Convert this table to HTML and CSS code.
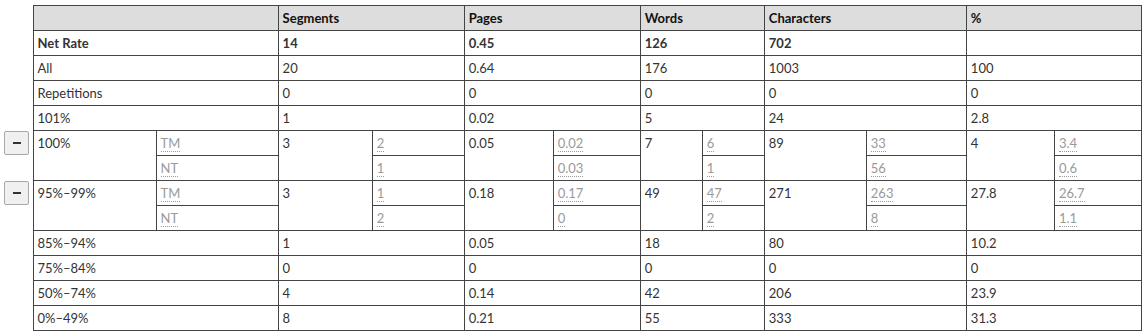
FILE: index.html
```html
<!DOCTYPE html>
<html lang="en">
<head>
<meta charset="utf-8">
<title>Statistics</title>
<link rel="stylesheet" href="styles.css">
</head>
<body>
<table class="stats">
  <colgroup>
    <col class="c-exp">
    <col class="c-label">
    <col class="c-sublabel">
    <col class="c-seg">
    <col class="c-segsub">
    <col class="c-pages">
    <col class="c-pagessub">
    <col class="c-words">
    <col class="c-wordssub">
    <col class="c-chars">
    <col class="c-charssub">
    <col class="c-pct">
    <col class="c-pctsub">
  </colgroup>
  <thead>
    <tr>
      <th class="exp"></th>
      <th colspan="2"></th>
      <th colspan="2">Segments</th>
      <th colspan="2">Pages</th>
      <th colspan="2">Words</th>
      <th colspan="2">Characters</th>
      <th colspan="2">%</th>
    </tr>
  </thead>
  <tbody>
    <tr class="net">
      <td class="exp"></td>
      <td colspan="2">Net Rate</td>
      <td colspan="2">14</td>
      <td colspan="2">0.45</td>
      <td colspan="2">126</td>
      <td colspan="2">702</td>
      <td colspan="2"></td>
    </tr>
    <tr>
      <td class="exp"></td>
      <td colspan="2">All</td>
      <td colspan="2">20</td>
      <td colspan="2">0.64</td>
      <td colspan="2">176</td>
      <td colspan="2">1003</td>
      <td colspan="2">100</td>
    </tr>
    <tr>
      <td class="exp"></td>
      <td colspan="2">Repetitions</td>
      <td colspan="2">0</td>
      <td colspan="2">0</td>
      <td colspan="2">0</td>
      <td colspan="2">0</td>
      <td colspan="2">0</td>
    </tr>
    <tr>
      <td class="exp"></td>
      <td colspan="2">101%</td>
      <td colspan="2">1</td>
      <td colspan="2">0.02</td>
      <td colspan="2">5</td>
      <td colspan="2">24</td>
      <td colspan="2">2.8</td>
    </tr>
    <tr>
      <td class="exp" rowspan="2"><button class="toggle" type="button" aria-label="Collapse"><span class="minus"></span></button></td>
      <td rowspan="2">100%</td>
      <td class="sub"><abbr title="Translation Memory">TM</abbr></td>
      <td rowspan="2">3</td>
      <td class="sub"><abbr>2</abbr></td>
      <td rowspan="2">0.05</td>
      <td class="sub"><abbr>0.02</abbr></td>
      <td rowspan="2">7</td>
      <td class="sub"><abbr>6</abbr></td>
      <td rowspan="2">89</td>
      <td class="sub"><abbr>33</abbr></td>
      <td rowspan="2">4</td>
      <td class="sub"><abbr>3.4</abbr></td>
    </tr>
    <tr>
      <td class="sub"><abbr title="No Translation">NT</abbr></td>
      <td class="sub"><abbr>1</abbr></td>
      <td class="sub"><abbr>0.03</abbr></td>
      <td class="sub"><abbr>1</abbr></td>
      <td class="sub"><abbr>56</abbr></td>
      <td class="sub"><abbr>0.6</abbr></td>
    </tr>
    <tr>
      <td class="exp" rowspan="2"><button class="toggle" type="button" aria-label="Collapse"><span class="minus"></span></button></td>
      <td rowspan="2">95%–99%</td>
      <td class="sub"><abbr title="Translation Memory">TM</abbr></td>
      <td rowspan="2">3</td>
      <td class="sub"><abbr>1</abbr></td>
      <td rowspan="2">0.18</td>
      <td class="sub"><abbr>0.17</abbr></td>
      <td rowspan="2">49</td>
      <td class="sub"><abbr>47</abbr></td>
      <td rowspan="2">271</td>
      <td class="sub"><abbr>263</abbr></td>
      <td rowspan="2">27.8</td>
      <td class="sub"><abbr>26.7</abbr></td>
    </tr>
    <tr>
      <td class="sub"><abbr title="No Translation">NT</abbr></td>
      <td class="sub"><abbr>2</abbr></td>
      <td class="sub"><abbr>0</abbr></td>
      <td class="sub"><abbr>2</abbr></td>
      <td class="sub"><abbr>8</abbr></td>
      <td class="sub"><abbr>1.1</abbr></td>
    </tr>
    <tr>
      <td class="exp"></td>
      <td colspan="2">85%–94%</td>
      <td colspan="2">1</td>
      <td colspan="2">0.05</td>
      <td colspan="2">18</td>
      <td colspan="2">80</td>
      <td colspan="2">10.2</td>
    </tr>
    <tr>
      <td class="exp"></td>
      <td colspan="2">75%–84%</td>
      <td colspan="2">0</td>
      <td colspan="2">0</td>
      <td colspan="2">0</td>
      <td colspan="2">0</td>
      <td colspan="2">0</td>
    </tr>
    <tr>
      <td class="exp"></td>
      <td colspan="2">50%–74%</td>
      <td colspan="2">4</td>
      <td colspan="2">0.14</td>
      <td colspan="2">42</td>
      <td colspan="2">206</td>
      <td colspan="2">23.9</td>
    </tr>
    <tr>
      <td class="exp"></td>
      <td colspan="2">0%–49%</td>
      <td colspan="2">8</td>
      <td colspan="2">0.21</td>
      <td colspan="2">55</td>
      <td colspan="2">333</td>
      <td colspan="2">31.3</td>
    </tr>
  </tbody>
</table>
</body>
</html>
```

FILE: styles.css
```css
html, body {
  margin: 0;
  padding: 0;
  background: #fff;
}

body {
  padding-top: 5px;
  font-family: "Lato", "Noto Sans", sans-serif;
  font-size: 13px;
  color: #333;
}

.stats {
  border-collapse: collapse;
  table-layout: fixed;
  width: 1142px;
}

.c-exp { width: 33px; }
.c-label { width: 123px; }
.c-sublabel { width: 122px; }
.c-seg { width: 94px; }
.c-segsub { width: 92px; }
.c-pages { width: 89px; }
.c-pagessub { width: 87px; }
.c-words { width: 62px; }
.c-wordssub { width: 62px; }
.c-chars { width: 102px; }
.c-charssub { width: 100px; }
.c-pct { width: 88px; }
.c-pctsub { width: 87px; }

.stats th,
.stats td {
  border: 1px solid #444;
  padding: 4px 4px;
  height: 16px;
  line-height: 16px;
  text-align: left;
  vertical-align: top;
  white-space: nowrap;
}

.stats th {
  background: #dddddd;
  color: #111;
  font-weight: 700;
}

.stats .exp {
  border: none;
  background: transparent;
  padding: 0;
}

.net td {
  font-weight: 700;
}

.sub abbr {
  color: #9a9a9a;
  text-decoration: none;
  border-bottom: 1px dotted #9a9a9a;
}

.toggle {
  display: flex;
  align-items: center;
  justify-content: center;
  width: 25px;
  height: 24px;
  margin: 0 0 0 4px;
  padding: 0;
  border: 1px solid #a8a8a8;
  border-radius: 2px;
  background: #f0f0f0;
}

.minus {
  display: block;
  width: 8px;
  height: 2px;
  background: #333;
}
```
